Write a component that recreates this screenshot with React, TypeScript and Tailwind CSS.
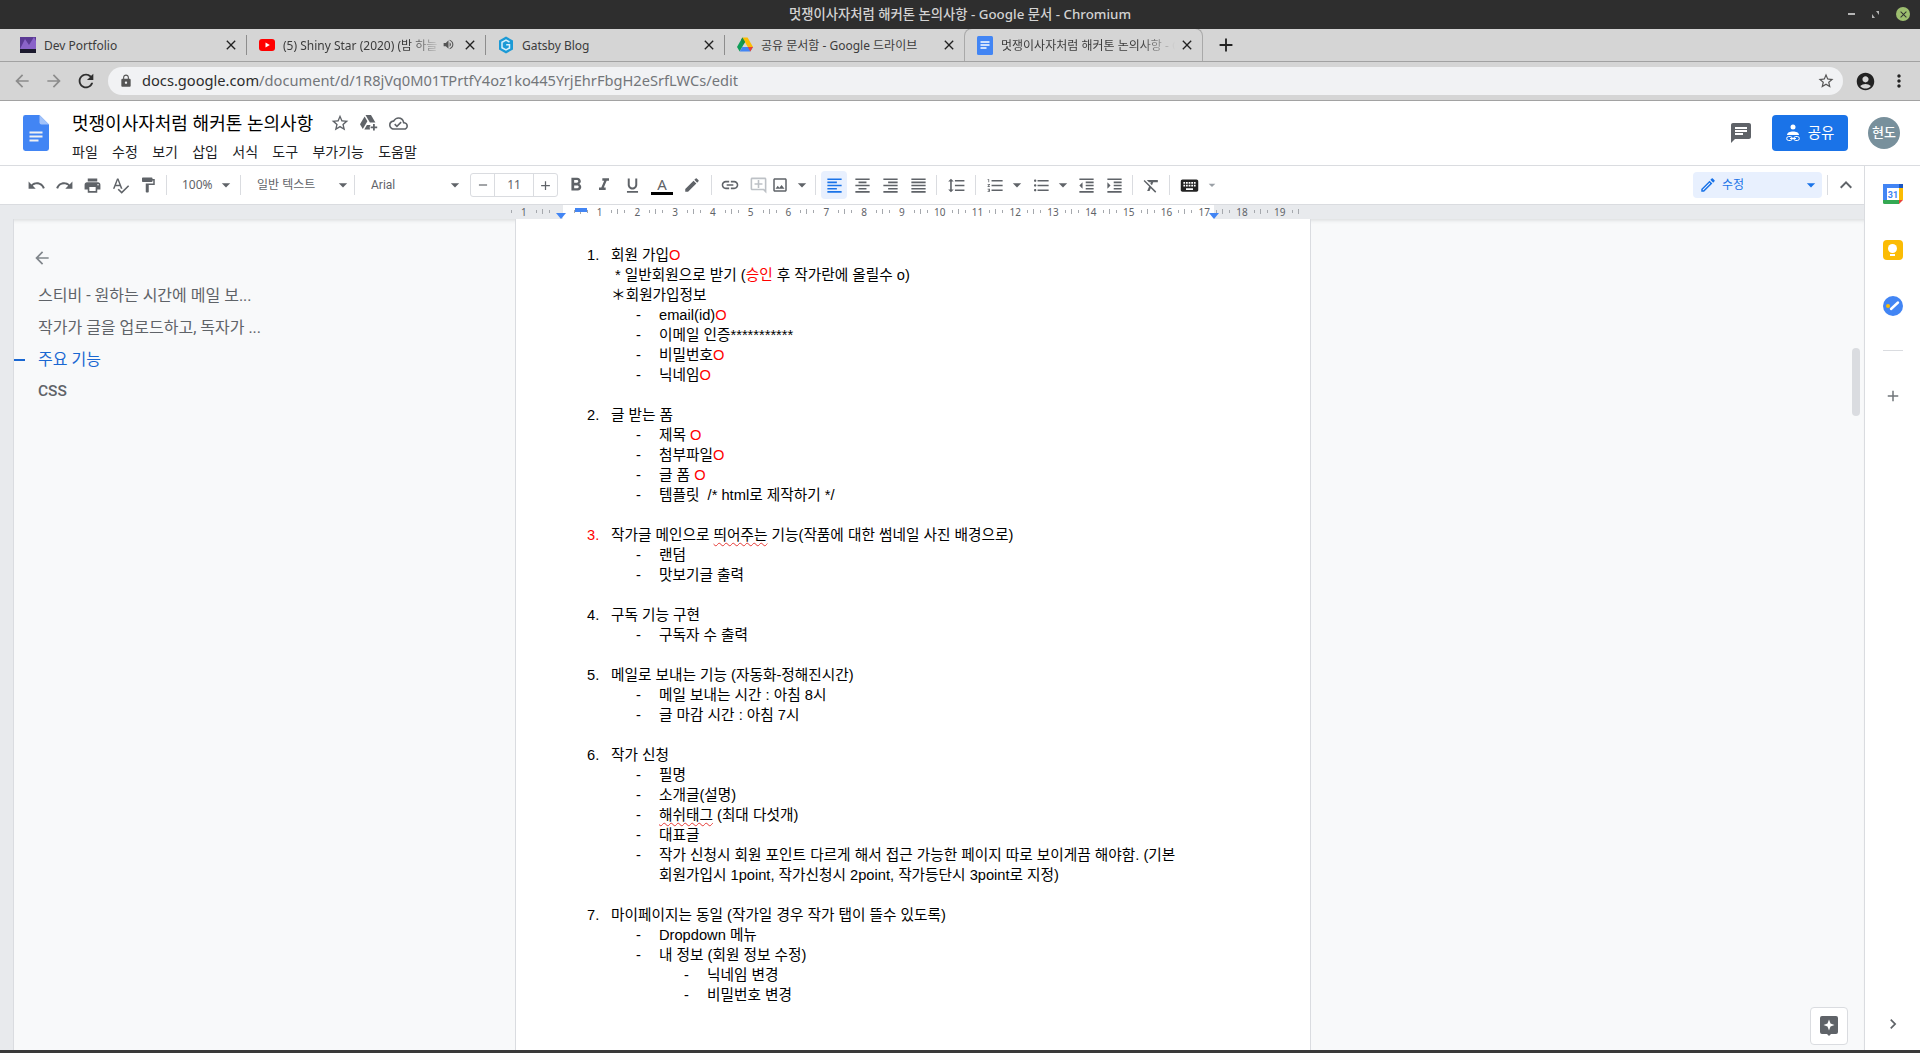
import type { ReactNode } from 'react';
import {
  MdAccountCircle, MdAdd, MdArrowBack, MdArrowDropDown, MdArrowForward, MdChat, MdChevronRight,
  MdClose, MdEdit, MdExpandLess, MdFormatAlignCenter, MdFormatAlignJustify, MdFormatAlignLeft, MdFormatAlignRight,
  MdFormatBold, MdFormatClear, MdFormatIndentDecrease, MdFormatIndentIncrease, MdFormatItalic, MdFormatLineSpacing,
  MdFormatListBulleted, MdFormatListNumbered, MdFormatPaint, MdFormatUnderlined, MdKeyboard, MdLink, MdLock, MdMoreVert,
  MdOutlineAddComment, MdOutlineCloudDone, MdOutlineEdit, MdOutlineImage, MdPrint, MdRedo, MdRefresh, MdRemove, MdSpellcheck,
  MdStarBorder, MdUndo, MdVolumeUp,
} from 'react-icons/md';

const uiFont = 'font-["Noto_Sans","Noto_Sans_CJK_KR",sans-serif]';
const docFont = 'font-["Liberation_Sans","Noto_Sans_CJK_KR",sans-serif]';

function PortfolioIcon() {
  return (
    <svg width="16" height="16" viewBox="0 0 16 16">
      <rect width="16" height="16" fill="#5b3a94" />
      <path d="M0 12 L5 2 L9 8 L14 0 L16 4 V13 H0Z" fill="#8a63c9" />
      <rect y="12" width="16" height="4" fill="#1c1a2e" />
    </svg>
  );
}

function YoutubeIcon() {
  return (
    <svg width="16" height="16" viewBox="0 0 16 16">
      <rect y="2" width="16" height="12" rx="3" fill="#f00" />
      <path d="M6.5 5.5 L10.8 8 L6.5 10.5Z" fill="#fff" />
    </svg>
  );
}

function GatsbyIcon() {
  return (
    <svg width="16" height="18" viewBox="0 0 16 18">
      <path d="M8 0.5 L15 4.5 V13.5 L8 17.5 L1 13.5 V4.5Z" fill="#1b9ad6" />
      <path d="M11.5 6 L8 4 L4 6.3 V11.7 L8 14 L11.5 12 V8.8 H8.2" fill="none" stroke="#d7f0fb" strokeWidth="1.5" />
    </svg>
  );
}

function DriveIcon() {
  return (
    <svg width="16" height="15" viewBox="0 0 16 15">
      <path d="M5.4 0.5 H10.6 L16 10 H10.8Z" fill="#fbbc04" />
      <path d="M5.4 0.5 L8 5 L2.7 14.5 L0 10Z" fill="#0f9d58" />
      <path d="M5.3 10 H16 L13.3 14.5 H2.7Z" fill="#4285f4" />
      <path d="M5.4 0.5 L8 5 L6.5 7.5 L4 3Z" fill="#1e8e3e" />
      <path d="M10.8 10 H16 L13.3 14.5Z" fill="#ea4335" />
    </svg>
  );
}

function DriveAddIcon() {
  return (
    <svg className="ml-[10px]" width="18" height="16" viewBox="0 0 18 16" fill="#5f6368">
      <path d="M5.5 0 H11 L15.4 7.5 H9.9Z" />
      <path d="M4.6 1.5 L7.4 6.3 L2.8 14 L0 9.2Z" />
      <path d="M4.3 14.5 L6.9 10 H10.5 A4.5 4.5 0 0 0 10 14.5Z" />
      <path d="M13 9h1.8v2.4h2.4v1.8h-2.4v2.4H13v-2.4h-2.4v-1.8H13z" />
    </svg>
  );
}

function DocsFavicon() {
  return (
    <svg width="16" height="19" viewBox="0 0 16 19">
      <rect width="16" height="19" rx="1.5" fill="#4285f4" />
      <path d="M3.5 6h9M3.5 9h9M3.5 12h6" stroke="#fff" strokeWidth="1.5" />
    </svg>
  );
}

function DocsLogo() {
  return (
    <svg width="26" height="36" viewBox="0 0 26 36">
      <path d="M16.5 0 H2.4 A2.4 2.4 0 0 0 0 2.4 V33.6 A2.4 2.4 0 0 0 2.4 36 H23.6 A2.4 2.4 0 0 0 26 33.6 V9.5Z" fill="#4285f4" />
      <path d="M16.5 0 L26 9.5 H18.5 A2 2 0 0 1 16.5 7.5Z" fill="#a1c2fa" />
      <path d="M6.5 17.5h13M6.5 21.5h13M6.5 25.5h9" stroke="#f1f1f1" strokeWidth="2" />
    </svg>
  );
}

function Tab({ icon, title, audio = false, active = false, divider = true, fade = false }: {
  icon: ReactNode; title: string; audio?: boolean; active?: boolean; divider?: boolean; fade?: boolean;
}) {
  return (
    <div className={`flex h-[33px] w-[239px] shrink-0 items-center pl-3 ${divider ? '' : 'pr-[7px]'} ${active ? 'rounded-t-lg border border-b-0 border-[#a9a9a9] bg-[#d5d5d5]' : ''}`}>
      <div className="flex w-4 shrink-0 justify-center">{icon}</div>
      <div className={`ml-2 flex-1 overflow-hidden whitespace-nowrap pt-[2px] text-[12px] text-[#3c3c3c] ${fade ? '[mask-image:linear-gradient(to_right,black_80%,transparent)]' : ''}`}>
        {title}
      </div>
      {audio && <MdVolumeUp className="mr-[3px] shrink-0 text-[#555]" size={13} />}
      <MdClose className="ml-1 shrink-0 text-[#222]" size={16} />
      {divider && <div className="ml-[7px] h-5 w-px shrink-0 bg-[#8d8d8d]" />}
    </div>
  );
}

function Sep({ ml = 'ml-1', mr = 'mr-1' }: { ml?: string; mr?: string }) {
  return <div className={`h-5 w-px shrink-0 bg-[#dadce0] ${ml} ${mr}`} />;
}

function Btn({ children, w = 'w-7', className = '' }: { children: ReactNode; w?: string; className?: string }) {
  return <div className={`flex h-7 shrink-0 items-center justify-center text-[#5f6368] ${w} ${className}`}>{children}</div>;
}

function Caret({ className = '' }: { className?: string }) {
  return <MdArrowDropDown size={20} className={`shrink-0 text-[#5f6368] ${className}`} />;
}

const rulerNums = [1, 0, 1, 2, 3, 4, 5, 6, 7, 8, 9, 10, 11, 12, 13, 14, 15, 16, 17, 18, 19];

function Ruler() {
  return (
    <div className="relative flex h-[14px] shrink-0 bg-[#e8eaed]">
      <div className="w-[563px]" />
      <div className="w-[651px] bg-white" />
      <div className="absolute left-[505px] top-0 flex h-full text-[10px] leading-[14px] text-[#5f6368]">
        {rulerNums.map((n, i) => (
          <div key={i} className="relative flex w-[37.8px] justify-center">
            {n > 0 ? n : ''}
            <span className="absolute left-[6px] top-[5px] h-[3px] w-px bg-[#a5a8ad]" />
            <span className="absolute right-[6px] top-[5px] h-[3px] w-px bg-[#a5a8ad]" />
            <span className="absolute right-0 top-[4px] h-[5px] w-px bg-[#a5a8ad]" />
          </div>
        ))}
      </div>
      <div className="absolute left-[575px] top-[3px] h-[4px] w-[12px] bg-[#4285f4]" />
      <svg className="absolute left-[556px] top-[8px]" width="10" height="6"><path d="M0 0h10L5 6z" fill="#4285f4" /></svg>
      <svg className="absolute left-[1209px] top-[8px]" width="10" height="6"><path d="M0 0h10L5 6z" fill="#4285f4" /></svg>
    </div>
  );
}

function Red({ children }: { children: ReactNode }) {
  return <span className="text-[#ff0000]">{children}</span>;
}

function Wavy({ children }: { children: ReactNode }) {
  return <span className="underline decoration-[#e53935] decoration-wavy decoration-1 underline-offset-2">{children}</span>;
}

function Num({ n, red = false, children }: { n: number; red?: boolean; children: ReactNode }) {
  return (
    <div className="flex h-5">
      <div className={`w-6 shrink-0 ${red ? 'text-[#ff0000]' : ''}`}>{n}.</div>
      <div>{children}</div>
    </div>
  );
}

function Sub({ children, level = 1 }: { children: ReactNode; level?: 1 | 2 }) {
  return (
    <div className={`flex ${level === 1 ? 'pl-[49px]' : 'pl-[97px]'}`}>
      <div className="w-[23px] shrink-0">-</div>
      <div className="w-[526px]">{children}</div>
    </div>
  );
}

function Blank() {
  return <div className="h-5" />;
}

function DocBody() {
  return (
    <div className={`pl-[71px] pt-[26px] text-[14.67px] leading-5 text-black ${docFont}`}>
      <Num n={1}>회원 가입<Red>O</Red></Num>
      <div className="pl-[28px]">* 일반회원으로 받기 (<Red>승인</Red> 후 작가란에 올릴수 o)</div>
      <div className="pl-[24px]">＊회원가입정보</div>
      <Sub>email(id)<Red>O</Red></Sub>
      <Sub>이메일 인증***********</Sub>
      <Sub>비밀번호<Red>O</Red></Sub>
      <Sub>닉네임<Red>O</Red></Sub>
      <Blank />
      <Num n={2}>글 받는 폼</Num>
      <Sub>제목 <Red>O</Red></Sub>
      <Sub>첨부파일<Red>O</Red></Sub>
      <Sub>글 폼 <Red>O</Red></Sub>
      <Sub>템플릿 {'\u00a0'}/* html로 제작하기 */</Sub>
      <Blank />
      <Num n={3} red>작가글 메인으로 <Wavy>띄어주는</Wavy> 기능(작품에 대한 썸네일 사진 배경으로)</Num>
      <Sub>랜덤</Sub>
      <Sub>맛보기글 출력</Sub>
      <Blank />
      <Num n={4}>구독 기능 구현</Num>
      <Sub>구독자 수 출력</Sub>
      <Blank />
      <Num n={5}>메일로 보내는 기능 (자동화-정해진시간)</Num>
      <Sub>메일 보내는 시간 : 아침 8시</Sub>
      <Sub>글 마감 시간 : 아침 7시</Sub>
      <Blank />
      <Num n={6}>작가 신청</Num>
      <Sub>필명</Sub>
      <Sub>소개글(설명)</Sub>
      <Sub><Wavy>해쉬태그</Wavy> (최대 다섯개)</Sub>
      <Sub>대표글</Sub>
      <Sub>작가 신청시 회원 포인트 다르게 해서 접근 가능한 페이지 따로 보이게끔 해야함. (기본 회원가입시 1point, 작가신청시 2point, 작가등단시 3point로 지정)</Sub>
      <Blank />
      <Num n={7}>마이페이지는 동일 (작가일 경우 작가 탭이 뜰수 있도록)</Num>
      <Sub>Dropdown 메뉴</Sub>
      <Sub>내 정보 (회원 정보 수정)</Sub>
      <Sub level={2}>닉네임 변경</Sub>
      <Sub level={2}>비밀번호 변경</Sub>
    </div>
  );
}

export default function App() {
  return (
    <div className={`flex h-[1053px] w-[1920px] flex-col overflow-hidden bg-white ${uiFont}`}>
      {/* window title */}
      <div className="relative flex h-[29px] shrink-0 items-center justify-center bg-[#2e2e2e] text-[13.33px] font-medium text-[#d3d3d3]">
        멋쟁이사자처럼 해커톤 논의사항 - Google 문서 - Chromium
        <div className="absolute right-[10px] top-[7px] flex items-center gap-[17px]">
          <div className="h-[2px] w-[7px] bg-[#b5b5b5]" />
          <svg width="7" height="7" viewBox="0 0 7 7"><path d="M0 7V3L3 7ZM7 0V4L4 0Z" fill="#b5b5b5" /></svg>
          <div className="flex h-[14px] w-[14px] items-center justify-center rounded-full bg-[#9dbe6f]">
            <MdClose size={11} className="text-[#2e2e2e]" />
          </div>
        </div>
      </div>

      {/* tab strip */}
      <div className="flex h-[33px] shrink-0 items-end border-b border-[#a2a2a2] bg-[#d5d5d5] pl-2">
        <Tab icon={<PortfolioIcon />} title="Dev Portfolio" />
        <Tab icon={<YoutubeIcon />} title="(5) Shiny Star (2020) (밤 하늘" audio fade />
        <Tab icon={<GatsbyIcon />} title="Gatsby Blog" />
        <Tab icon={<DriveIcon />} title="공유 문서함 - Google 드라이브" divider={false} />
        <Tab icon={<DocsFavicon />} title="멋쟁이사자처럼 해커톤 논의사항 - G" active divider={false} fade />
        <MdAdd size={22} className="mb-[5px] ml-3 text-[#222]" />
      </div>

      {/* browser toolbar */}
      <div className="flex h-[39px] shrink-0 items-center border-b border-[#a2a2a2] bg-[#d5d5d5]">
        <MdArrowBack size={20} className="ml-3 text-[#8c8c8c]" />
        <MdArrowForward size={20} className="ml-3 text-[#8c8c8c]" />
        <MdRefresh size={22} className="ml-[11px] text-[#2f2f2f]" />
        <div className="ml-[11px] flex h-7 w-[1735px] items-center rounded-full bg-[#f1f2f4] pl-[11px] pr-2 text-[14.65px]">
          <MdLock size={14} className="text-[#555]" />
          <span className="ml-[9px] whitespace-nowrap text-[#2c2c2c]">docs.google.com<span className="text-[#73767a]">/document/d/1R8jVq0M01TPrtfY4oz1ko445YrjEhrFbgH2eSrfLWCs/edit</span></span>
          <MdStarBorder size={18} className="ml-auto text-[#555]" />
        </div>
        <MdAccountCircle size={21} className="ml-3 text-[#222]" />
        <MdMoreVert size={20} className="ml-[13px] text-[#222]" />
      </div>

      {/* docs header */}
      <div className="flex h-[65px] shrink-0 border-b border-[#dadce0] bg-white">
        <div className="ml-[23px] mt-[14px]"><DocsLogo /></div>
        <div className="ml-[23px] flex flex-col">
          <div className="mt-2 flex h-7 items-center">
            <span className="text-[18px] text-black">멋쟁이사자처럼 해커톤 논의사항</span>
            <MdStarBorder size={20} className="ml-[17px] text-[#5f6368]" />
            <DriveAddIcon />
            <MdOutlineCloudDone size={19} className="ml-[11px] text-[#5f6368]" />
          </div>
          <div className="mt-1 flex h-5 items-center gap-[14.3px] text-[14px] text-[#202124]">
            {['파일', '수정', '보기', '삽입', '서식', '도구', '부가기능', '도움말'].map((m) => (
              <span key={m}>{m}</span>
            ))}
          </div>
        </div>
        <div className="ml-auto flex items-start">
          <MdChat size={24} className="mt-[20px] text-[#5f6368]" />
          <div className="ml-[19px] mt-[14px] flex h-9 w-[76px] items-center justify-center gap-2 rounded bg-[#1a73e8] text-[14.5px] text-white">
            <svg width="14" height="18" viewBox="0 0 14 18" fill="#fff">
              <circle cx="7" cy="3" r="2.5" />
              <path d="M1 11c0-2.5 3-3.5 6-3.5s6 1 6 3.5z" />
              <rect x="0.7" y="12.5" width="5.5" height="4" rx="2" fill="none" stroke="#fff" />
              <rect x="7.8" y="12.5" width="5.5" height="4" rx="2" fill="none" stroke="#fff" />
              <path d="M4 14.5h6" stroke="#fff" />
            </svg>
            공유
          </div>
          <div className="ml-5 mr-5 mt-4 flex h-8 w-8 items-center justify-center rounded-full bg-[#78909c] text-[13px] font-medium text-white">현도</div>
        </div>
      </div>

      <div className="flex min-h-0 flex-1">
        <div className="flex w-[1864px] shrink-0 flex-col">
          {/* format toolbar */}
          <div className="flex h-[39px] shrink-0 items-center border-b border-[#dadce0] pl-[22px] pr-[6px]">
            <Btn><MdUndo size={19} /></Btn>
            <Btn><MdRedo size={19} /></Btn>
            <Btn><MdPrint size={19} /></Btn>
            <Btn><MdSpellcheck size={19} /></Btn>
            <Btn><MdFormatPaint size={18} /></Btn>
            <Sep />
            <Btn w="w-[65px]" className="pl-[11px] text-[12px]"><span className="flex-1">100%</span><Caret /></Btn>
            <Sep />
            <Btn w="w-[108px]" className="pl-3 text-[12px]"><span className="flex-1">일반 텍스트</span><Caret /></Btn>
            <Sep ml="ml-px" />
            <Btn w="w-[106px]" className="pl-3 text-[12px]"><span className="flex-1 font-['Roboto']">Arial</span><Caret /></Btn>
            <div className="ml-[5px] flex h-[24px] w-[88px] shrink-0 items-center rounded-[3px] border border-[#dadce0] text-[12px] text-[#5f6368]">
              <div className="flex h-full w-6 items-center justify-center border-r border-[#dadce0]"><MdRemove size={14} /></div>
              <div className="flex-1 text-center">11</div>
              <div className="flex h-full w-6 items-center justify-center border-l border-[#dadce0]"><MdAdd size={15} /></div>
            </div>
            <Btn className="ml-1"><MdFormatBold size={22} /></Btn>
            <Btn><MdFormatItalic size={20} /></Btn>
            <Btn><MdFormatUnderlined size={19} /></Btn>
            <Btn w="w-8" className="flex-col text-[15px] leading-4">
              <span>A</span>
              <span className="h-[3px] w-[22px] bg-black" />
            </Btn>
            <Btn><MdEdit size={18} /></Btn>
            <Sep ml="ml-[5px]" />
            <Btn><MdLink size={20} /></Btn>
            <Btn className="!text-[#bdc1c6]"><MdOutlineAddComment size={19} /></Btn>
            <Btn w="w-[22px]" className="ml-[-3px]"><MdOutlineImage size={18} /></Btn>
            <Caret className="ml-px" />
            <Sep ml="ml-[3px]" mr="mr-[5px]" />
            <Btn w="w-[26px]" className="rounded bg-[#e8f0fe] !text-[#1a73e8]"><MdFormatAlignLeft size={19} /></Btn>
            <Btn className="ml-px"><MdFormatAlignCenter size={19} /></Btn>
            <Btn><MdFormatAlignRight size={19} /></Btn>
            <Btn><MdFormatAlignJustify size={19} /></Btn>
            <Sep mr="mr-[5px]" />
            <Btn><MdFormatLineSpacing size={19} /></Btn>
            <Sep ml="ml-[5px]" mr="mr-[5px]" />
            <Btn><MdFormatListNumbered size={19} /></Btn>
            <Caret className="ml-[-2px]" />
            <Btn><MdFormatListBulleted size={19} /></Btn>
            <Caret className="ml-[-2px]" />
            <Btn className="ml-[-1px]"><MdFormatIndentDecrease size={19} /></Btn>
            <Btn><MdFormatIndentIncrease size={19} /></Btn>
            <Sep />
            <Btn><MdFormatClear size={19} /></Btn>
            <Sep mr="mr-[5px]" />
            <Btn className="!text-[#222]"><MdKeyboard size={21} /></Btn>
            <MdArrowDropDown size={16} className="ml-px text-[#9aa0a6]" />
            <div className="ml-auto flex h-[26px] w-[129px] items-center rounded bg-[#e8f0fe] pl-[6px] text-[12px] text-[#1a73e8]">
              <MdOutlineEdit size={18} className="shrink-0" />
              <span className="ml-[5px] flex-1">수정</span>
              <MdArrowDropDown size={20} className="mr-px" />
            </div>
            <Sep ml="ml-[5px]" mr="mr-[6px]" />
            <MdExpandLess size={24} className="text-[#5f6368]" />
          </div>

          <Ruler />

          <div className="relative flex min-h-0 flex-1 bg-[#f8f9fa] shadow-[inset_0_4px_4px_-3px_rgba(60,64,67,0.18)]">
            {/* outline sidebar */}
            <div className="w-[14px] shrink-0 border-r border-[#dadce0] bg-[#e8eaed]" />
            <div className="relative w-[501px] shrink-0 pl-[24px] pt-[29px] font-['Roboto','Noto_Sans_CJK_KR',sans-serif] text-[16px] text-[#5f6368]">
              <MdArrowBack size={20} className="ml-[-6px] text-[#80868b]" />
              <div className="mt-3 flex h-8 items-center">스티비 - 원하는 시간에 메일 보...</div>
              <div className="flex h-8 items-center">작가가 글을 업로드하고, 독자가 ...</div>
              <div className="relative flex h-8 items-center text-[#1967d2]">
                <span className="absolute left-[-24px] top-[15px] h-0.5 w-[11px] bg-[#1967d2]" />
                주요 기능
              </div>
              <div className="flex h-8 items-center text-[15.5px] font-medium">CSS</div>
            </div>

            {/* document page */}
            <div className="z-10 w-[796px] shrink-0 border-x border-[#dadce0] bg-white">
              <DocBody />
            </div>

            <div className="absolute left-[1852px] top-[129px] h-[68px] w-2 rounded bg-[#dadce0]" />
            <div className="absolute left-[1810px] top-[788px] flex h-[38px] w-[38px] items-center justify-center rounded border border-[#dadce0] bg-white">
              <svg width="18" height="20" viewBox="0 0 18 20">
                <path d="M2 0h14a2 2 0 0 1 2 2v14a2 2 0 0 1-2 2h-5l-2 2-2-2H2a2 2 0 0 1-2-2V2a2 2 0 0 1 2-2z" fill="#5f6368" />
                <path d="M9 3.5 L10.5 7.5 L14.5 9 L10.5 10.5 L9 14.5 L7.5 10.5 L3.5 9 L7.5 7.5Z" fill="#fff" />
              </svg>
            </div>
          </div>
        </div>

        {/* add-on rail */}
        <div className="flex w-14 shrink-0 flex-col items-center border-l border-[#dadce0] bg-white pt-[18px]">
          <svg width="20" height="20" viewBox="0 0 20 20">
            <rect width="20" height="20" rx="1.5" fill="#fff" />
            <path d="M0 0H16V4H4V16H0Z" fill="#4285f4" />
            <path d="M16 0 L20 0 V4 H16Z" fill="#1a56c4" />
            <path d="M16 4H20V16H16Z" fill="#fbbc04" />
            <path d="M0 16H16V20H1.5A1.5 1.5 0 0 1 0 18.5Z" fill="#34a853" />
            <path d="M16 16H20L16 20Z" fill="#ea4335" />
            <text x="10" y="14" fontSize="9" fontWeight="700" fill="#4285f4" textAnchor="middle" fontFamily="Roboto">31</text>
          </svg>
          <div className="mt-9 flex h-5 w-5 flex-col items-center justify-center rounded-sm bg-[#fbbc04]">
            <div className="h-[9px] w-[9px] rounded-full bg-white" />
            <div className="mt-px h-[2px] w-[5px] bg-white" />
          </div>
          <svg className="mt-9" width="20" height="20" viewBox="0 0 20 20">
            <circle cx="10" cy="10" r="10" fill="#4285f4" />
            <path d="M8 13L15 6.5" stroke="#fff" strokeWidth="2.4" strokeLinecap="round" />
            <circle cx="5" cy="10" r="2" fill="#fbbc04" />
          </svg>
          <div className="mt-[34px] h-px w-5 bg-[#dadce0]" />
          <MdAdd size={18} className="mt-[36px] text-[#70757a]" />
          <MdChevronRight size={20} className="mb-4 mt-auto text-[#5f6368]" />
        </div>
      </div>

      <div className="h-[3px] shrink-0 bg-[#3a3a3a]" />
    </div>
  );
}
